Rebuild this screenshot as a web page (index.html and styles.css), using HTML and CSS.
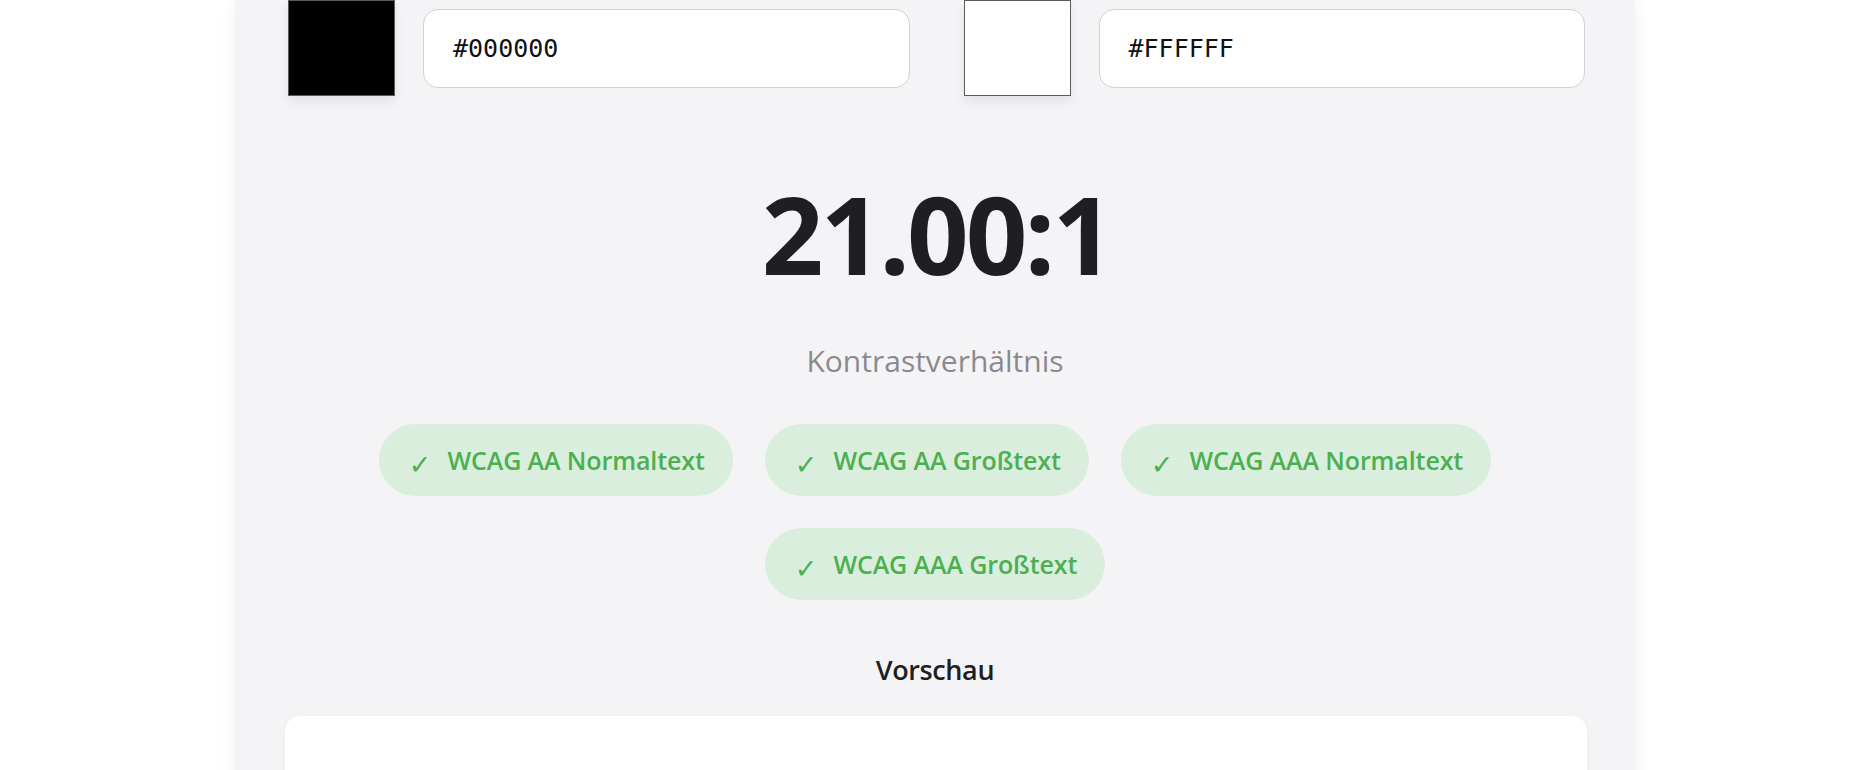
FILE: index.html
```html
<!DOCTYPE html>
<html lang="de">
<head>
<meta charset="utf-8">
<title>Kontrastprüfer</title>
<link rel="stylesheet" href="styles.css">
</head>
<body>
<main class="panel">
  <section class="colors">
    <div class="color-field">
      <div class="swatch swatch-black"></div>
      <div class="hex-input">#000000</div>
    </div>
    <div class="color-field">
      <div class="swatch swatch-white"></div>
      <div class="hex-input">#FFFFFF</div>
    </div>
  </section>

  <div class="ratio">21.00:1</div>
  <div class="ratio-label">Kontrastverhältnis</div>

  <div class="badges">
    <div class="badge"><span class="check">✓</span><span class="badge-text">WCAG AA Normaltext</span></div>
    <div class="badge"><span class="check">✓</span><span class="badge-text">WCAG AA Großtext</span></div>
    <div class="badge"><span class="check">✓</span><span class="badge-text">WCAG AAA Normaltext</span></div>
    <div class="badge"><span class="check">✓</span><span class="badge-text">WCAG AAA Großtext</span></div>
  </div>

  <h2 class="preview-title">Vorschau</h2>
  <div class="preview-box"></div>
</main>
</body>
</html>
```

FILE: styles.css
```css
html, body {
  margin: 0;
  padding: 0;
  background: #ffffff;
  height: 100%;
  overflow: hidden;
}

body {
  font-family: "Open Sans", "Noto Sans", "Liberation Sans", sans-serif;
  color: #222222;
}

.panel {
  width: 1400px;
  margin: 0 auto;
  box-sizing: border-box;
  padding: 0 50px 40px;
  background: #f4f4f6;
  box-shadow: 0 0 18px rgba(0, 0, 0, 0.06);
  min-height: 100%;
  display: flex;
  flex-direction: column;
}

.colors {
  display: grid;
  grid-template-columns: 1fr 1fr;
  column-gap: 54px;
  padding-left: 3px;
}

.color-field {
  display: flex;
  align-items: center;
  gap: 28px;
}

.swatch {
  width: 107px;
  height: 96px;
  flex: none;
  box-sizing: border-box;
  border: 1px solid #5a5a5a;
  box-shadow: 0 6px 10px rgba(0, 0, 0, 0.07);
}

.swatch-black { background: #000000; }
.swatch-white { background: #ffffff; }

.hex-input {
  flex: 1;
  height: 79px;
  box-sizing: border-box;
  border: 1px solid #d2d2d6;
  border-radius: 15px;
  background: #ffffff;
  padding-left: 29px;
  display: flex;
  align-items: center;
  font-family: "DejaVu Sans Mono", "Liberation Mono", monospace;
  font-size: 25px;
  color: #111111;
}

.ratio {
  margin-top: 84px;
  text-align: center;
  font-size: 108px;
  line-height: 108px;
  font-weight: 700;
  letter-spacing: -3px;
  color: #1f1f21;
  padding-left: 3px;
}

.ratio-label {
  margin-top: 55px;
  text-align: center;
  font-size: 30px;
  line-height: 36px;
  color: #8a8a8e;
}

.badges {
  margin-top: 45px;
  display: flex;
  flex-wrap: wrap;
  justify-content: center;
  gap: 32px;
}

.badge {
  height: 72px;
  box-sizing: border-box;
  padding: 0 28px 0 30px;
  border-radius: 36px;
  background: #d9eedd;
  color: #4caf50;
  display: flex;
  align-items: center;
  gap: 16px;
}

.check {
  font-family: "DejaVu Sans", sans-serif;
  font-size: 27px;
  line-height: 1;
  font-weight: 400;
  margin-top: 8px;
  color: #4caf50;
}

.badge-text {
  font-size: 25px;
  font-weight: 600;
  letter-spacing: -0.1px;
}

.preview-title {
  margin: 54px 0 0;
  text-align: center;
  font-size: 27px;
  line-height: 32px;
  font-weight: 600;
  letter-spacing: -0.4px;
  color: #1f1f21;
}

.preview-box {
  margin-top: 30px;
  height: 300px;
  background: #ffffff;
  border-radius: 15px;
  box-shadow: 0 2px 10px rgba(0, 0, 0, 0.04);
  margin-right: -2px;
}
```
